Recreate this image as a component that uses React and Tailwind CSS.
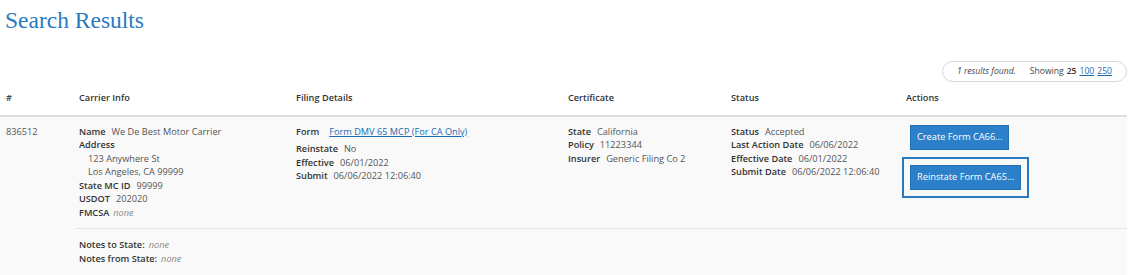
import React from "react";

const L = ({ children }) => (
  <span className="font-semibold text-[#333]">{children}</span>
);
const V = ({ children }) => <span className="ml-[6px] text-[#555]">{children}</span>;
const N = () => <span className="ml-[4px] italic text-[#888]">none</span>;

export default function App() {
  return (
    <div
      className="w-[1127px] bg-white text-[9.2px] leading-[13.5px] text-[#555]"
      style={{ fontFamily: '"Open Sans", "Noto Sans", sans-serif' }}
    >
      <h1
        className="pl-[5px] pt-[5px] text-[23.5px] leading-[30px] text-[#2a7ac0]"
        style={{ fontFamily: '"Liberation Serif", Georgia, serif' }}
      >
        Search Results
      </h1>
      <div className="mt-[26px] flex justify-end">
        <div className="flex h-[21px] items-center whitespace-nowrap rounded-full border border-[#d6d6d6] pl-[14px] pr-[14px] text-[8.6px] text-[#444]">
          <span className="italic">1 results found.</span>
          <span className="ml-[14px]">Showing</span>
          <span className="ml-[3px] font-semibold text-[#333]">25</span>
          <span className="ml-[3px] text-[#1a6bb5] underline">100</span>
          <span className="ml-[3px] text-[#1a6bb5] underline">250</span>
        </div>
      </div>
      <div className="mt-[9px] grid grid-cols-[76px_217px_272px_163px_175px_1fr] border-b-2 border-[#dedede] pb-[10px] font-semibold text-[#333]">
        <div className="pl-[6px]">#</div>
        <div className="pl-[3px]">Carrier Info</div>
        <div className="pl-[3px]">Filing Details</div>
        <div className="pl-[3px]">Certificate</div>
        <div className="pl-[3px]">Status</div>
        <div className="pl-[3px]">Actions</div>
      </div>
      <div className="bg-[#f9f9f9]">
        <div className="grid grid-cols-[76px_217px_272px_163px_175px_1fr] pt-[8px] pb-[9px]">
          <div className="pl-[6px]">836512</div>
          <div className="pl-[3px]">
            <div><L>Name</L><V>We De Best Motor Carrier</V></div>
            <div><L>Address</L></div>
            <div className="pl-[9px]">123 Anywhere St</div>
            <div className="pl-[9px]">Los Angeles, CA 99999</div>
            <div><L>State MC ID</L><V>99999</V></div>
            <div><L>USDOT</L><V>202020</V></div>
            <div><L>FMCSA</L><N /></div>
          </div>
          <div className="pl-[3px]">
            <div className="mb-[4px]">
              <L>Form</L>
              <span className="ml-[10px] text-[#1a6bb5] underline">Form DMV 65 MCP (For CA Only)</span>
            </div>
            <div><L>Reinstate</L><V>No</V></div>
            <div><L>Effective</L><V>06/01/2022</V></div>
            <div><L>Submit</L><V>06/06/2022 12:06:40</V></div>
          </div>
          <div className="pl-[3px]">
            <div><L>State</L><V>California</V></div>
            <div><L>Policy</L><V>11223344</V></div>
            <div><L>Insurer</L><V>Generic Filing Co 2</V></div>
          </div>
          <div className="pl-[3px]">
            <div><L>Status</L><V>Accepted</V></div>
            <div><L>Last Action Date</L><V>06/06/2022</V></div>
            <div><L>Effective Date</L><V>06/01/2022</V></div>
            <div><L>Submit Date</L><V>06/06/2022 12:06:40</V></div>
          </div>
          <div className="flex flex-col items-start gap-[15px] pl-[7px]">
            <button className="h-[25px] border border-[#1f6fb3] bg-[#2b80c9] px-[6px] text-[9.25px] text-white">
              Create Form CA66...
            </button>
            <button className="h-[25px] border border-[#1f6fb3] bg-[#2b80c9] px-[6px] text-[9.25px] text-white outline-2 outline-offset-[6px] outline-[#2a7ac0]">
              Reinstate Form CA65...
            </button>
          </div>
        </div>
        <div className="ml-[76px] border-t border-[#e3e3e3] pl-[3px] pt-[9px] pb-[11px]">
          <div><L>Notes to State:</L><N /></div>
          <div><L>Notes from State:</L><N /></div>
        </div>
      </div>
    </div>
  );
}
